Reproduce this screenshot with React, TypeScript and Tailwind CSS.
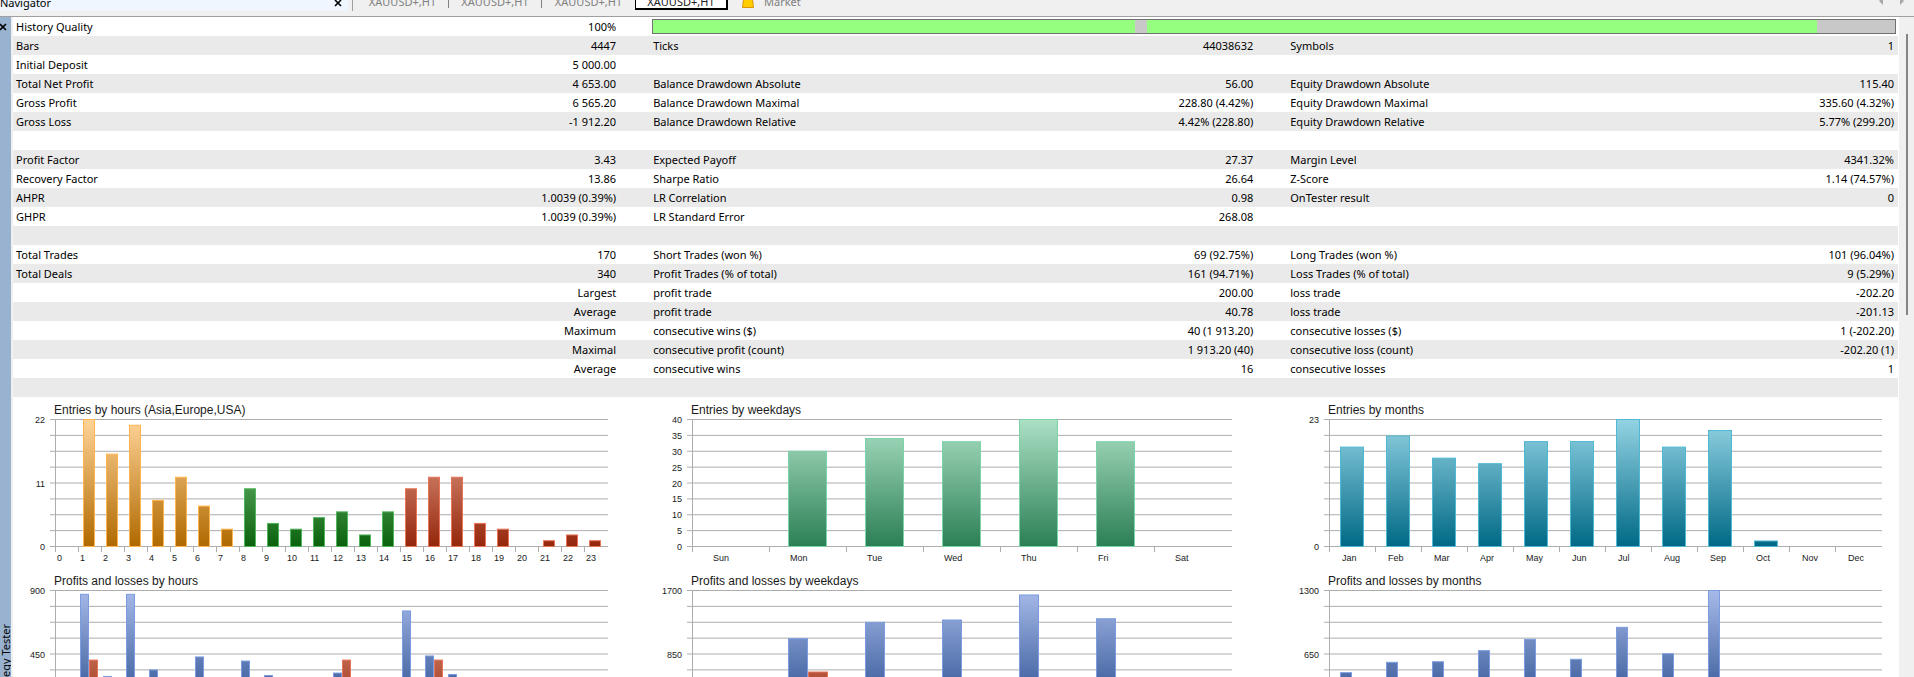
import React from 'react';

type Pair = [string, string];

const rows: [Pair, Pair, Pair][] = [
  [['Bars', '4447'], ['Ticks', '44038632'], ['Symbols', '1']],
  [['Initial Deposit', '5 000.00'], ['', ''], ['', '']],
  [['Total Net Profit', '4 653.00'], ['Balance Drawdown Absolute', '56.00'], ['Equity Drawdown Absolute', '115.40']],
  [['Gross Profit', '6 565.20'], ['Balance Drawdown Maximal', '228.80 (4.42%)'], ['Equity Drawdown Maximal', '335.60 (4.32%)']],
  [['Gross Loss', '-1 912.20'], ['Balance Drawdown Relative', '4.42% (228.80)'], ['Equity Drawdown Relative', '5.77% (299.20)']],
  [['', ''], ['', ''], ['', '']],
  [['Profit Factor', '3.43'], ['Expected Payoff', '27.37'], ['Margin Level', '4341.32%']],
  [['Recovery Factor', '13.86'], ['Sharpe Ratio', '26.64'], ['Z-Score', '1.14 (74.57%)']],
  [['AHPR', '1.0039 (0.39%)'], ['LR Correlation', '0.98'], ['OnTester result', '0']],
  [['GHPR', '1.0039 (0.39%)'], ['LR Standard Error', '268.08'], ['', '']],
  [['', ''], ['', ''], ['', '']],
  [['Total Trades', '170'], ['Short Trades (won %)', '69 (92.75%)'], ['Long Trades (won %)', '101 (96.04%)']],
  [['Total Deals', '340'], ['Profit Trades (% of total)', '161 (94.71%)'], ['Loss Trades (% of total)', '9 (5.29%)']],
  [['', 'Largest'], ['profit trade', '200.00'], ['loss trade', '-202.20']],
  [['', 'Average'], ['profit trade', '40.78'], ['loss trade', '-201.13']],
  [['', 'Maximum'], ['consecutive wins ($)', '40 (1 913.20)'], ['consecutive losses ($)', '1 (-202.20)']],
  [['', 'Maximal'], ['consecutive profit (count)', '1 913.20 (40)'], ['consecutive loss (count)', '-202.20 (1)']],
  [['', 'Average'], ['consecutive wins', '16'], ['consecutive losses', '1']],
  [['', ''], ['', ''], ['', '']],
];

type Tone = 'orange' | 'green' | 'red' | 'mint' | 'teal' | 'blue';

const tones: Record<Tone, { top: string; bottom: string; edge: string }> = {
  orange: { top: '#ffd498', bottom: '#b06900', edge: '#ffb54f' },
  green: { top: '#8fd296', bottom: '#0a620c', edge: '#52b45c' },
  red: { top: '#f0b09c', bottom: '#94260a', edge: '#e87459' },
  mint: { top: '#abe0c5', bottom: '#2b7f55', edge: '#7dd3a9' },
  teal: { top: '#93d3e3', bottom: '#006986', edge: '#4fb9d4' },
  blue: { top: '#a6bae9', bottom: '#24488a', edge: '#7c9ce0' },
};

type Series = { values: number[]; tone: (i: number) => Tone };

type ChartSpec = {
  title: string;
  max: number;
  labels: string[];
  yLabels: [number, string][];
  slot: number;
  barOffset: number;
  barWidth: number;
  labelOffset: number;
  series: Series[];
  viewWidth: number;
};

const LEFT = 42;
const TOP = 22.5;
const PLOT = 127;
const BASE = TOP + PLOT;

function Chart({ spec, id }: { spec: ChartSpec; id: string }) {
  const width = spec.slot * spec.labels.length;
  return (
    <svg
      viewBox={`0 0 ${spec.viewWidth} 171`}
      className="block w-full"
      role="img"
      aria-label={spec.title}
      fontFamily='"Liberation Sans", Arial, sans-serif'
    >
      <defs>
        {(Object.keys(tones) as Tone[]).map((t) => (
          <linearGradient key={t} id={`${id}-${t}`} gradientUnits="userSpaceOnUse" x1="0" x2="0" y1={TOP} y2={BASE}>
            <stop offset="0" stopColor={tones[t].top} />
            <stop offset="1" stopColor={tones[t].bottom} />
          </linearGradient>
        ))}
      </defs>
      <text x={LEFT - 1} y="17" fontSize="12" fill="#1a1a1a">
        {spec.title}
      </text>
      {Array.from({ length: 9 }, (_, i) => (
        <line key={i} x1={LEFT - 5} x2={LEFT + width + 1} y1={TOP + (PLOT / 8) * i} y2={TOP + (PLOT / 8) * i} stroke="#adadad" />
      ))}
      <line x1={LEFT + 0.5} x2={LEFT + 0.5} y1={TOP} y2={BASE + 5.5} stroke="#adadad" />
      {spec.labels.map((label, i) => (
        <g key={label}>
          <line x1={LEFT + spec.slot * i + 0.5} x2={LEFT + spec.slot * i + 0.5} y1={BASE} y2={BASE + 5.5} stroke="#adadad" />
          <text x={LEFT + spec.slot * i + spec.labelOffset} y="164" fontSize="9" fill="#1a1a1a">
            {label}
          </text>
        </g>
      ))}
      {spec.yLabels.map(([v, label]) => (
        <text key={label} x={LEFT - 10} y={BASE - (v / spec.max) * PLOT + 3.5} textAnchor="end" fontSize="9" fill="#1a1a1a">
          {label}
        </text>
      ))}
      {spec.series.map((s, k) =>
        s.values.map((v, i) => {
          if (!v) return null;
          const h = (v / spec.max) * PLOT;
          const tone = s.tone(i);
          return (
            <rect
              key={`${k}-${i}`}
              x={LEFT + spec.slot * i + spec.barOffset + k * spec.barWidth + 0.5}
              y={BASE - h}
              width={spec.barWidth - 1}
              height={h}
              fill={`url(#${id}-${tone})`}
              stroke={tones[tone].edge}
            />
          );
        }),
      )}
    </svg>
  );
}

const hours = Array.from({ length: 24 }, (_, i) => String(i));
const days = ['Sun', 'Mon', 'Tue', 'Wed', 'Thu', 'Fri', 'Sat'];
const months = ['Jan', 'Feb', 'Mar', 'Apr', 'May', 'Jun', 'Jul', 'Aug', 'Sep', 'Oct', 'Nov', 'Dec'];

const charts: ChartSpec[] = [
  {
    title: 'Entries by hours (Asia,Europe,USA)',
    max: 22,
    labels: hours,
    yLabels: [[0, '0'], [11, '11'], [22, '22']],
    slot: 23,
    barOffset: 5,
    barWidth: 12,
    labelOffset: 2,
    viewWidth: 637,
    series: [
      {
        values: [0, 22, 16, 21, 8, 12, 7, 3, 10, 4, 3, 5, 6, 2, 6, 10, 12, 12, 4, 3, 0, 1, 2, 1],
        tone: (i) => (i < 8 ? 'orange' : i < 15 ? 'green' : 'red'),
      },
    ],
  },
  {
    title: 'Entries by weekdays',
    max: 40,
    labels: days,
    yLabels: [0, 5, 10, 15, 20, 25, 30, 35, 40].map((v): [number, string] => [v, String(v)]),
    slot: 77,
    barOffset: 19,
    barWidth: 39,
    labelOffset: 21,
    viewWidth: 637,
    series: [{ values: [0, 30, 34, 33, 40, 33, 0], tone: () => 'mint' }],
  },
  {
    title: 'Entries by months',
    max: 23,
    labels: months,
    yLabels: [[0, '0'], [23, '23']],
    slot: 46,
    barOffset: 11,
    barWidth: 24,
    labelOffset: 13,
    viewWidth: 611,
    series: [{ values: [18, 20, 16, 15, 19, 19, 23, 18, 21, 1, 0, 0], tone: () => 'teal' }],
  },
  {
    title: 'Profits and losses by hours',
    max: 900,
    labels: hours,
    yLabels: [[0, '0'], [450, '450'], [900, '900']],
    slot: 23,
    barOffset: 2,
    barWidth: 9,
    labelOffset: 2,
    viewWidth: 637,
    series: [
      {
        values: [0, 873, 291, 873, 337, 180, 429, 120, 400, 298, 130, 220, 315, 90, 240, 755, 436, 305, 150, 110, 0, 60, 80, 40],
        tone: () => 'blue',
      },
      { values: [0, 407, 0, 0, 0, 0, 0, 0, 0, 0, 0, 0, 407, 0, 0, 0, 407, 0, 0, 0, 0, 0, 0, 0], tone: () => 'red' },
    ],
  },
  {
    title: 'Profits and losses by weekdays',
    max: 1700,
    labels: days,
    yLabels: [[0, '0'], [850, '850'], [1700, '1700']],
    slot: 77,
    barOffset: 19,
    barWidth: 20,
    labelOffset: 21,
    viewWidth: 637,
    series: [
      { values: [0, 1055, 1274, 1305, 1640, 1322, 0], tone: () => 'blue' },
      { values: [0, 609, 0, 0, 0, 0, 0], tone: () => 'red' },
    ],
  },
  {
    title: 'Profits and losses by months',
    max: 1300,
    labels: months,
    yLabels: [[0, '0'], [650, '650'], [1300, '1300']],
    slot: 46,
    barOffset: 11,
    barWidth: 12,
    labelOffset: 13,
    viewWidth: 611,
    series: [{ values: [459, 565, 571, 684, 800, 596, 923, 653, 1300, 40, 0, 0], tone: () => 'blue' }],
  },
];

function CloseIcon() {
  return (
    <svg viewBox="0 0 8 8" className="block size-2" stroke="#000" strokeWidth="1.6" aria-hidden="true">
      <path d="M1 1 L7 7 M7 1 L1 7" />
    </svg>
  );
}

function TopBar() {
  return (
    <header className="flex h-[17px] shrink-0 items-end overflow-hidden border-b border-[#a0a0a0] bg-[#f0f0f0]">
      <div className="flex h-[22px] w-full shrink-0 items-start leading-3">
        <div className="flex h-[17px] w-[348px] items-center justify-between bg-[#eff6ff] pr-1.5 text-black">
          <span className="leading-4">Navigator</span>
          <button type="button" aria-label="Close Navigator">
            <CloseIcon />
          </button>
        </div>
        <nav aria-label="Charts" className="ml-1 flex h-[17px] items-start border-l border-[#a0a0a0] pl-1 text-[#808080]">
          <button type="button" className="h-3.5 w-[92px] border-r border-[#808080] pt-0.5">XAUUSD+,H1</button>
          <button type="button" className="h-3.5 w-[93px] border-r border-[#808080] pt-0.5">XAUUSD+,H1</button>
          <button type="button" className="h-3.5 w-[93px] pt-0.5">XAUUSD+,H1</button>
          <button type="button" aria-current="page" className="h-4 w-[93px] border-r-2 border-b-2 border-l border-black bg-white pt-0.5 text-[#202020]">
            XAUUSD+,H1
          </button>
          <button type="button" className="ml-[14px] flex items-center gap-[10px]">
            <svg viewBox="0 0 12 14" className="block h-3.5 w-3" aria-hidden="true">
              <path d="M3 6 V4 a3 3 0 0 1 6 0 V6" fill="none" stroke="#d99400" strokeWidth="1.3" />
              <path d="M1.5 5.5 H10.5 L11.5 13.5 H0.5 Z" fill="#ffcc00" stroke="#d99400" />
            </svg>
            <span className="pt-0.5">Market</span>
          </button>
        </nav>
        <div className="ml-auto flex gap-[17px] pt-[3px] pr-2.5">
          <button type="button" aria-label="Scroll tabs left">
            <svg viewBox="0 0 4 8" className="block h-2 w-1" aria-hidden="true"><path d="M4 0 V8 L0 4 Z" fill="#a8a8a8" /></svg>
          </button>
          <button type="button" aria-label="Scroll tabs right">
            <svg viewBox="0 0 4 8" className="block h-2 w-1" aria-hidden="true"><path d="M0 0 V8 L4 4 Z" fill="#a8a8a8" /></svg>
          </button>
        </div>
      </div>
    </header>
  );
}

function Report() {
  return (
    <table className="w-full table-fixed border-collapse text-black">
      <colgroup>
        <col className="w-[20%]" />
        <col className="w-[13.8%]" />
        <col className="w-[20%]" />
        <col className="w-[13.8%]" />
        <col className="w-[20%]" />
        <col className="w-[12.4%]" />
      </colgroup>
      <tbody>
        <tr className="h-[19px]">
          <th scope="row" className="p-0 pl-[3px] text-left font-normal">History Quality</th>
          <td className="p-0 pr-[34px] text-right">100%</td>
          <td colSpan={4} className="p-0 pr-0.5 pl-0.5">
            <div className="flex h-[15px] border border-[#707070] bg-[#c8c8c8]" role="img" aria-label="History quality 100%">
              <div className="w-[38.8%] bg-[#95ff80]" />
              <div className="w-[1%]" />
              <div className="w-[53.9%] bg-[#95ff80]" />
            </div>
          </td>
        </tr>
        {rows.map((row, r) => (
          <tr key={r} className="h-[19px] odd:bg-white even:bg-[#eaeaea]">
            {row.map(([label, value], c) => (
              <React.Fragment key={c}>
                <th scope="row" className="p-0 pl-[3px] text-left font-normal whitespace-nowrap">{label}</th>
                <td className={c === 2 ? 'p-0 pr-1 text-right whitespace-nowrap' : 'p-0 pr-[34px] text-right whitespace-nowrap'}>{value}</td>
              </React.Fragment>
            ))}
          </tr>
        ))}
      </tbody>
    </table>
  );
}

export default function App() {
  return (
    <div className="flex h-screen flex-col overflow-hidden bg-[#f0f0f0] font-['Noto_Sans','Open_Sans',sans-serif] text-[11px] leading-4">
      <TopBar />
      <div className="flex min-h-0 flex-1">
        <aside className="flex w-[11px] shrink-0 flex-col items-center justify-between overflow-hidden bg-[#99b2d0] pt-1.5">
          <button type="button" aria-label="Close Strategy Tester" className="-ml-[5px]">
            <CloseIcon />
          </button>
          <span className="-mb-6 rotate-180 text-black [writing-mode:vertical-rl] leading-[11px] whitespace-nowrap">Strategy Tester</span>
        </aside>
        <main className="ml-0.5 min-w-0 flex-1 overflow-hidden bg-white pr-px">
          <Report />
          <div className="grid grid-cols-[637fr_637fr_611fr]">
            {charts.map((spec, i) => (
              <Chart key={spec.title} spec={spec} id={`chart${i}`} />
            ))}
          </div>
        </main>
        <div className="flex w-[15px] shrink-0 justify-center pt-[17px]">
          <div className="h-[281px] w-0.5 bg-[#858585]" />
        </div>
      </div>
    </div>
  );
}
